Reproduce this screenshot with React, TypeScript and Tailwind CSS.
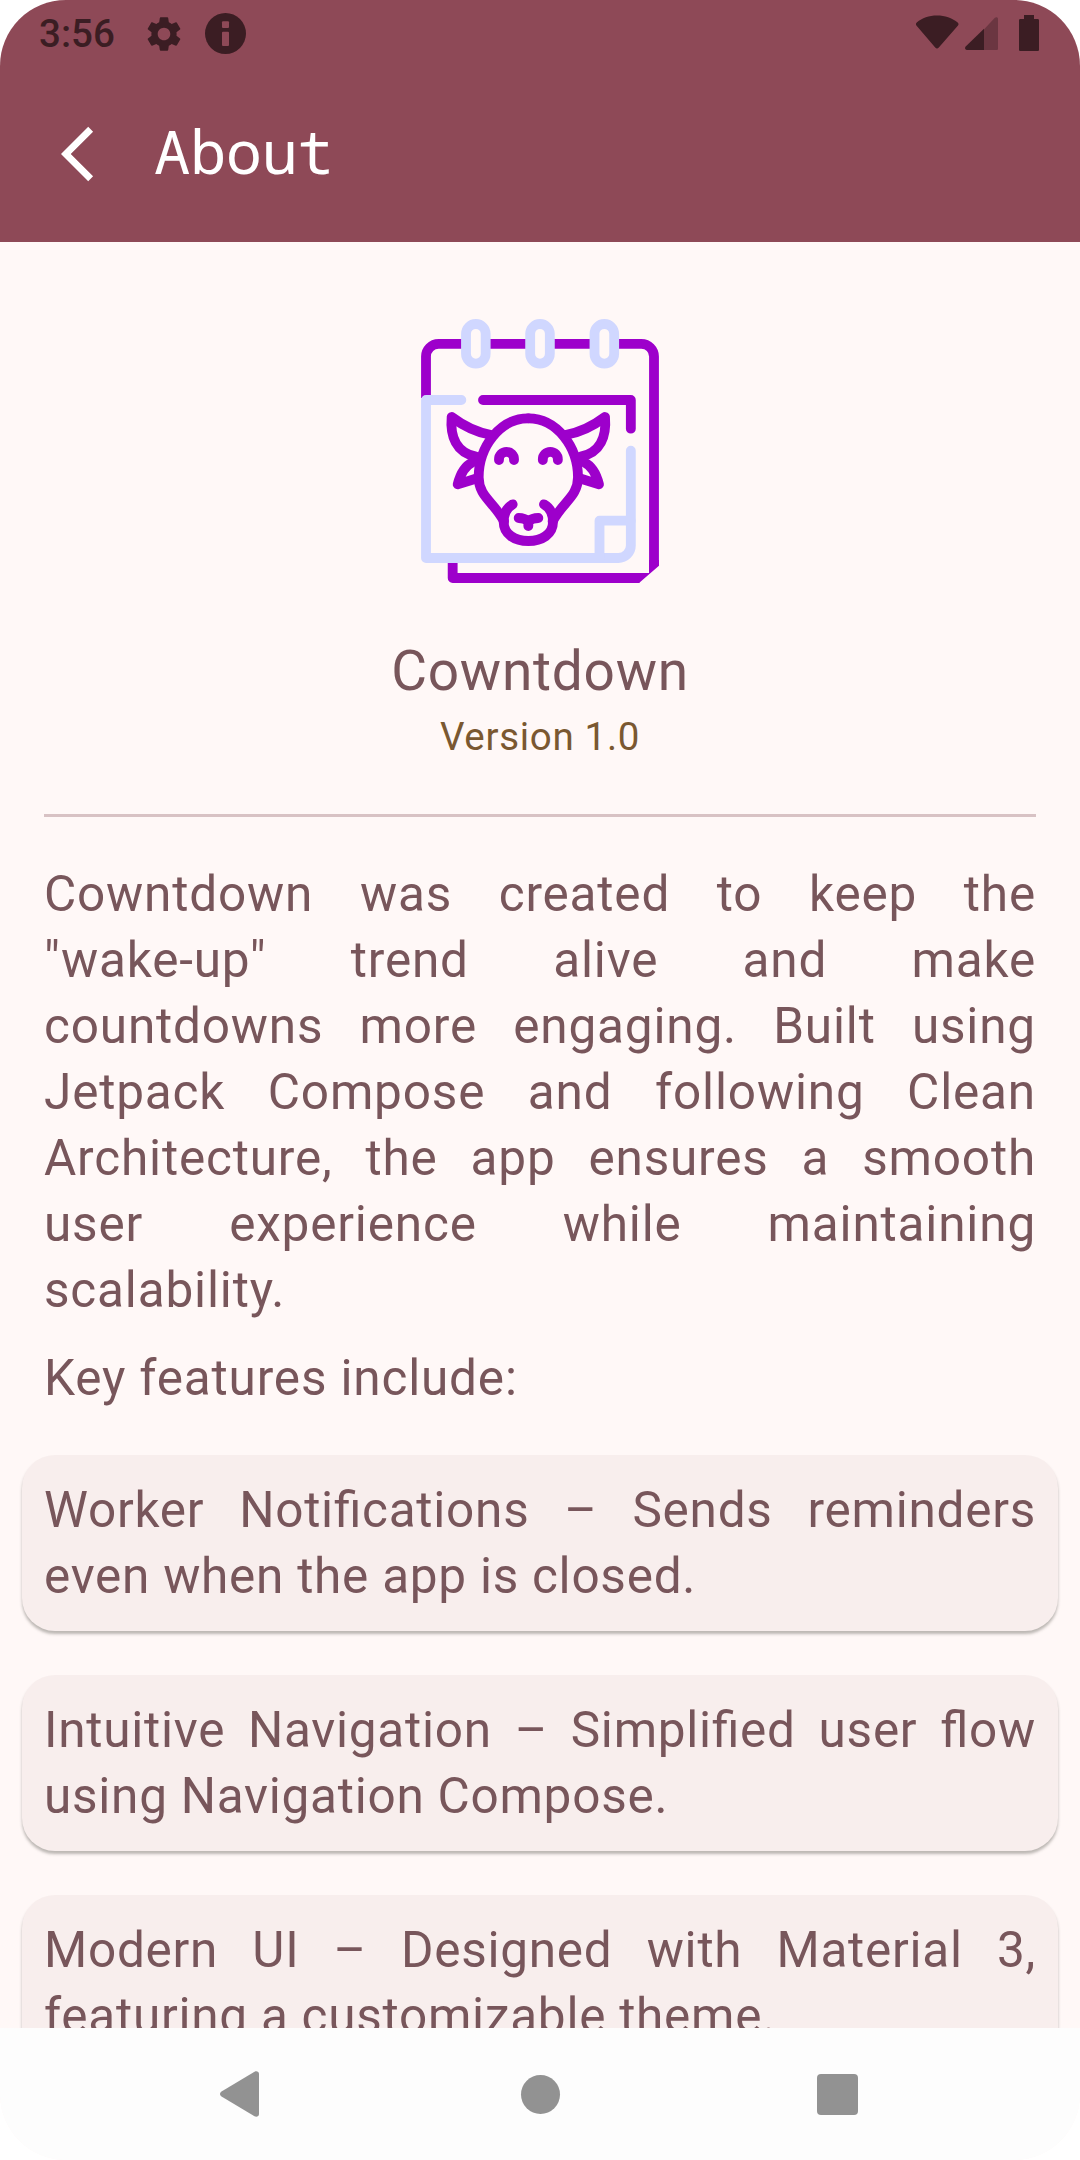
const features = [
  "Worker Notifications – Sends reminders even when the app is closed.",
  "Intuitive Navigation – Simplified user flow using Navigation Compose.",
  "Modern UI – Designed with Material 3, featuring a customizable theme.",
];

function StatusBar() {
  return (
    <div className="flex h-[66px] items-start justify-between pl-[39px] pr-[41px] text-[#3b1d23]">
      <div className="flex h-[66px] items-start">
        <span className="mt-[11px] w-[104px] text-[38.5px] leading-[45px] font-medium">3:56</span>
        <svg className="mt-[12.5px] h-[42px] w-[42px]" viewBox="0 0 24 24" fill="currentColor">
          <path d="M19.14 12.94c.04-.3.06-.61.06-.94 0-.32-.02-.64-.07-.94l2.03-1.58a.49.49 0 0 0 .12-.61l-1.92-3.32a.488.488 0 0 0-.59-.22l-2.39.96c-.5-.38-1.03-.7-1.62-.94l-.36-2.54a.484.484 0 0 0-.48-.41h-3.84c-.24 0-.43.17-.47.41l-.36 2.54c-.59.24-1.13.57-1.62.94l-2.39-.96c-.22-.08-.47 0-.59.22L2.74 8.87c-.12.21-.08.47.12.61l2.03 1.58c-.05.3-.09.63-.09.94s.02.64.07.94l-2.03 1.58a.49.49 0 0 0-.12.61l1.92 3.32c.12.22.37.29.59.22l2.39-.96c.5.38 1.03.7 1.62.94l.36 2.54c.05.24.24.41.48.41h3.84c.24 0 .44-.17.47-.41l.36-2.54c.59-.24 1.13-.56 1.62-.94l2.39.96c.22.08.47 0 .59-.22l1.92-3.32c.12-.22.07-.47-.12-.61l-2.01-1.58zM12 15.6c-1.98 0-3.6-1.62-3.6-3.6s1.62-3.6 3.6-3.6 3.6 1.62 3.6 3.6-1.62 3.6-3.6 3.6z" />
        </svg>
        <svg className="mt-[13px] ml-[20px] h-[41px] w-[41px]" viewBox="0 0 41 41">
          <circle cx="20.5" cy="20.5" r="20.5" fill="currentColor" />
          <rect x="17" y="8.3" width="7" height="6.7" rx="1" fill="#8e4957" />
          <rect x="17" y="18.7" width="7" height="14.3" rx="1" fill="#8e4957" />
        </svg>
      </div>
      <svg className="mt-[14px] h-[38px] w-[123px]" viewBox="0 0 123 38" fill="currentColor">
        <path d="M21 1.5C29 1.5 36 4 41.4 8.3C42.7 9.4 42.8 10.3 42 11.4L22.8 33.6C21.7 34.8 20.3 34.8 19.2 33.6L0.4 11.4C-.4 10.3 -.3 9.4 1 8.3C6 4 13 1.5 21 1.5Z" />
        <path opacity=".42" d="M67 16.5L78.6 4C80 2.6 82 3 82 5V34.4C82 35.5 81.5 36 80.4 36H67Z" />
        <path d="M68 14.8V36H50.8C49 36 48.5 34 49.7 32.6Z" />
        <path d="M108 1H118V5H121.5C122.5 5 123 5.5 123 6.5V35.5C123 36.5 122.5 37 121.5 37H104.5C103.5 37 103 36.5 103 35.5V6.5C103 5.5 103.5 5 104.5 5H108Z" />
      </svg>
    </div>
  );
}

function TopBar() {
  return (
    <div className="flex h-[176px] items-start pl-[61px] text-white">
      <svg className="mt-[55px] h-[66px] w-[66px]" viewBox="0 0 24 24" fill="currentColor">
        <path d="M11.67 3.87 9.9 2.1 0 12l9.9 9.9 1.77-1.77L3.54 12z" />
      </svg>
      <h1 className="ml-[27px] mt-[46px] text-[60.5px] leading-[77px] tracking-[-0.4px] font-['Noto_Sans_Mono','DejaVu_Sans_Mono',monospace]">
        About
      </h1>
    </div>
  );
}

function Logo() {
  return (
    <svg className="h-[266px] w-[240px]" viewBox="60 54 720 798" fill="none" strokeWidth="29.5" strokeLinecap="round" strokeLinejoin="round">
      <g stroke="#9d00cb">
        <path strokeLinecap="butt" d="M78 294V170a38 38 0 0 1 38-38.5H724a38 38 0 0 1 38 38.5V790" />
        <path strokeLinecap="butt" d="M158 775V834H718" />
        <path stroke="none" fill="#9d00cb" d="M747 780H777V797L717 849V819H747Z" />
        <path d="M249 300H692.5V386" />
      </g>
      <g stroke="#d0d7ff">
        <rect x="198" y="72" width="59" height="119" rx="29.5" fill="#fff8f7" />
        <rect x="390.5" y="72" width="59" height="119" rx="29.5" fill="#fff8f7" />
        <rect x="583.5" y="72" width="59" height="119" rx="29.5" fill="#fff8f7" />
        <path d="M184 300H78V774H655a37.5 37.5 0 0 0 37.5-37.5V452" />
        <path d="M598.5 774V662H692" />
      </g>
      <g stroke="#9d00cb">
        <path d="M385 355C300 355 236 440 236 532C236 590 282 606 312 664" />
        <path d="M385 355C470 355 534 440 534 532C534 590 488 606 458 664" />
        <path d="M338 613C318 624 311 642 311 666C311 703 345 723 385 723C425 723 459 703 459 666C459 642 452 624 432 613" />
        <path d="M274 405C232 398 192 379 155 351C150 408 168 458 228 470" />
        <path d="M496 405C538 398 578 379 615 351C620 408 602 458 542 470" />
        <path d="M217 487C194 498 180 525 173 553L234 534" />
        <path d="M553 487C576 498 590 525 597 553L536 534" />
        <path d="M297 480V478a22.5 22.5 0 0 1 45 0V480" />
        <path d="M428.5 480V478a22.5 22.5 0 0 1 45 0V480" />
        <path d="M356 654C368 654 378 658 385 664C392 658 402 654 415 654M385 664V678" />
      </g>
    </svg>
  );
}

function NavigationBar() {
  return (
    <nav className="flex h-[132px] shrink-0 items-center bg-[#fdfdfd] pl-[220px] text-[#929292]">
      <svg className="h-[46px] w-[39px]" viewBox="0 0 39 46" fill="currentColor">
        <path d="M1.5 20.5L34.5 .7C36.5 -.3 39 .5 39 3V43C39 45.5 36.5 46.3 34.5 45.3L1.5 25.5C-.5 24.2 -.5 21.8 1.5 20.5Z" />
      </svg>
      <div className="ml-[262px] mt-px h-[39px] w-[39px] rounded-full bg-current" />
      <div className="ml-[257px] mt-px h-[41px] w-[41px] rounded-[4px] bg-current" />
    </nav>
  );
}

export default function App() {
  return (
    <div className="h-[2160px] w-[1080px] bg-white">
      <div className="flex h-full flex-col overflow-hidden rounded-[66px] bg-[#fff8f7] font-['Roboto',sans-serif]">
        <header className="h-[242px] shrink-0 bg-[#8e4957]">
          <StatusBar />
          <TopBar />
        </header>
        <main className="min-h-0 flex-1 overflow-hidden text-[#78565b]">
          <div className="flex flex-col items-center px-[44px] pt-[76px]">
            <Logo />
            <h2 className="mt-[54px] text-[55px] leading-[66px] tracking-[0.75px]">Cowntdown</h2>
            <p className="mt-[5px] text-[38.5px] leading-[55px] tracking-[0.6875px] text-[#7a5831]">Version 1.0</p>
            <div className="mt-[50px] h-[3px] w-full bg-[#d8c2c4]" />
          </div>
          <div className="mt-[44px] px-[44px] text-justify text-[49.5px] leading-[66px] tracking-[0.82px]">
            <p>
              Cowntdown was created to keep the <span className="whitespace-nowrap">"wake-up"</span> trend alive and
              make countdowns more engaging. Built using Jetpack Compose and following Clean Architecture, the app
              ensures a smooth user experience while maintaining scalability.
            </p>
            <p className="mt-[22px]">Key features include:</p>
          </div>
          <ul className="mt-[44px] flex flex-col gap-[44px] px-[22px]">
            {features.map((feature) => (
              <li
                key={feature}
                className="rounded-[33px] bg-[#f8eeed] p-[22px] text-justify text-[49.5px] leading-[66px] tracking-[0.74px] [font-feature-settings:'liga'_1] shadow-[0_3px_3px_rgba(60,60,50,0.34)]"
              >
                {feature}
              </li>
            ))}
          </ul>
        </main>
        <NavigationBar />
      </div>
    </div>
  );
}
